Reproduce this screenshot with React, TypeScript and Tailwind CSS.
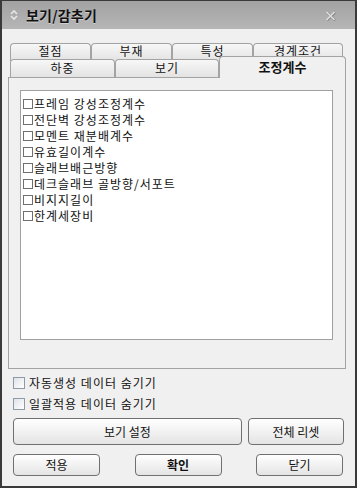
import React from "react"

const font = { fontFamily: '"Noto Sans CJK KR", "Noto Sans", sans-serif' }

const backTabs = [
  { label: "절점", w: "w-[81px]" },
  { label: "부재", w: "w-[81px]" },
  { label: "특성", w: "w-[81px]" },
  { label: "경계조건", w: "w-[90px]" },
]

const items = [
  "프레임 강성조정계수",
  "전단벽 강성조정계수",
  "모멘트 재분배계수",
  "유효길이계수",
  "슬래브배근방향",
  "데크슬래브 골방향/서포트",
  "비지지길이",
  "한계세장비",
]

function Button({ label, className, bold }: { label: string; className: string; bold?: boolean }) {
  return (
    <button
      className={`flex items-center justify-center rounded-[4px] border border-[#707070] bg-gradient-to-b from-[#ffffff] to-[#e4e4e4] text-[12px] text-[#111] ${bold ? "font-bold" : ""} ${className}`}
    >
      {label}
    </button>
  )
}

export default function App() {
  return (
    <div
      style={font}
      className="flex h-[488px] w-[357px] flex-col border-x-2 border-b-2 border-t border-[#3a3a3a] bg-[#f0f0f0] text-[#111]"
    >
      {/* title bar */}
      <div className="flex h-[28px] items-center bg-gradient-to-b from-[#a2a2a2] to-[#b6b6b6] pl-[7px] pr-[19px]">
        <svg width="10" height="12" viewBox="0 0 10 12" className="mr-[7px]">
          <path d="M2 5 L5 2 L8 5" fill="none" stroke="#e6e6e6" strokeWidth="1.6" />
          <path d="M2 7 L5 10 L8 7" fill="none" stroke="#e6e6e6" strokeWidth="1.6" />
        </svg>
        <span className="text-[14px] font-bold tracking-[0.2px] text-[#111] [text-shadow:0_1px_0_#d0d0d0]">
          보기/감추기
        </span>
        <svg width="11" height="10" viewBox="0 0 11 10" className="ml-auto mt-[2px]">
          <path d="M1.5 1 L9.5 9 M9.5 1 L1.5 9" stroke="#8a8a8a" strokeWidth="2.2" transform="translate(0.6,0.6)" />
          <path d="M1.5 1 L9.5 9 M9.5 1 L1.5 9" stroke="#dedede" strokeWidth="1.6" />
        </svg>
      </div>

      {/* tabs + panel */}
      <div className="pl-[6px] pr-[9px] pt-[14px]">
        <div className="ml-[2px] flex h-[16px]">
          {backTabs.map((t) => (
            <div
              key={t.label}
              className={`${t.w} flex h-[18px] items-start justify-center rounded-t-[4px] border border-b-0 border-[#a3a3a3] bg-gradient-to-b from-[#f7f7f7] to-[#e3e3e3] text-[12px] leading-[13px] tracking-[1px]`}
            >
              {t.label}
            </div>
          ))}
        </div>
        <div className="relative ml-[2px] flex h-[18px] items-end">
          <div className="flex h-[18px] w-[105px] justify-center rounded-t-[4px] border border-b-0 border-[#a3a3a3] bg-gradient-to-b from-[#f7f7f7] to-[#e3e3e3] text-[12px] leading-[16px] tracking-[1px]">
            하중
          </div>
          <div className="flex h-[18px] w-[104px] justify-center rounded-t-[4px] border border-b-0 border-[#a3a3a3] bg-gradient-to-b from-[#f7f7f7] to-[#e3e3e3] text-[12px] leading-[16px] tracking-[1px]">
            보기
          </div>
          <div className="relative z-10 mb-[-1px] flex h-[22px] w-[127px] justify-center rounded-t-[4px] border border-b-0 border-[#a3a3a3] bg-[#f0f0f0] pt-[1px] text-[13px] font-bold leading-[17px]">
            조정계수
          </div>
        </div>
        <div className="h-[292px] w-[338px] border border-[#a3a3a3] bg-[#f0f0f0] pl-[11px] pt-[12px]">
          <div className="h-[250px] w-[313px] border border-[#a0a0a0] bg-white pl-[2px] pt-[5px]">
            {items.map((it) => (
              <div key={it} className="flex h-[16px] items-center text-[12px] tracking-[1px]">
                <span className="mr-[1px] h-[10px] w-[10px] border border-[#6f6f6f] bg-white" />
                <span className="leading-[16px]">{it}</span>
              </div>
            ))}
          </div>
        </div>
      </div>

      {/* options */}
      <div className="mt-[3px] flex flex-col pl-[11px] pr-[11px]">
        {["자동생성 데이터 숨기기", "일괄적용 데이터 숨기기"].map((t) => (
          <div key={t} className="flex h-[21px] items-center text-[12px] tracking-[1px]">
            <span className="mr-[4px] h-[12px] w-[12px] border border-[#8e9aa8] bg-gradient-to-br from-[#dfe3e8] to-[#ffffff]" />
            {t}
          </div>
        ))}
        <div className="mt-[4px] flex gap-[6px]">
          <Button label="보기 설정" className="h-[27px] w-[229px]" />
          <Button label="전체 리셋" className="h-[27px] w-[96px]" />
        </div>
        <div className="mt-[9px] flex justify-between pr-[1px]">
          <Button label="적용" className="h-[22px] w-[87px]" />
          <Button label="확인" bold className="h-[22px] w-[87px]" />
          <Button label="닫기" className="h-[22px] w-[87px]" />
        </div>
      </div>
    </div>
  )
}
